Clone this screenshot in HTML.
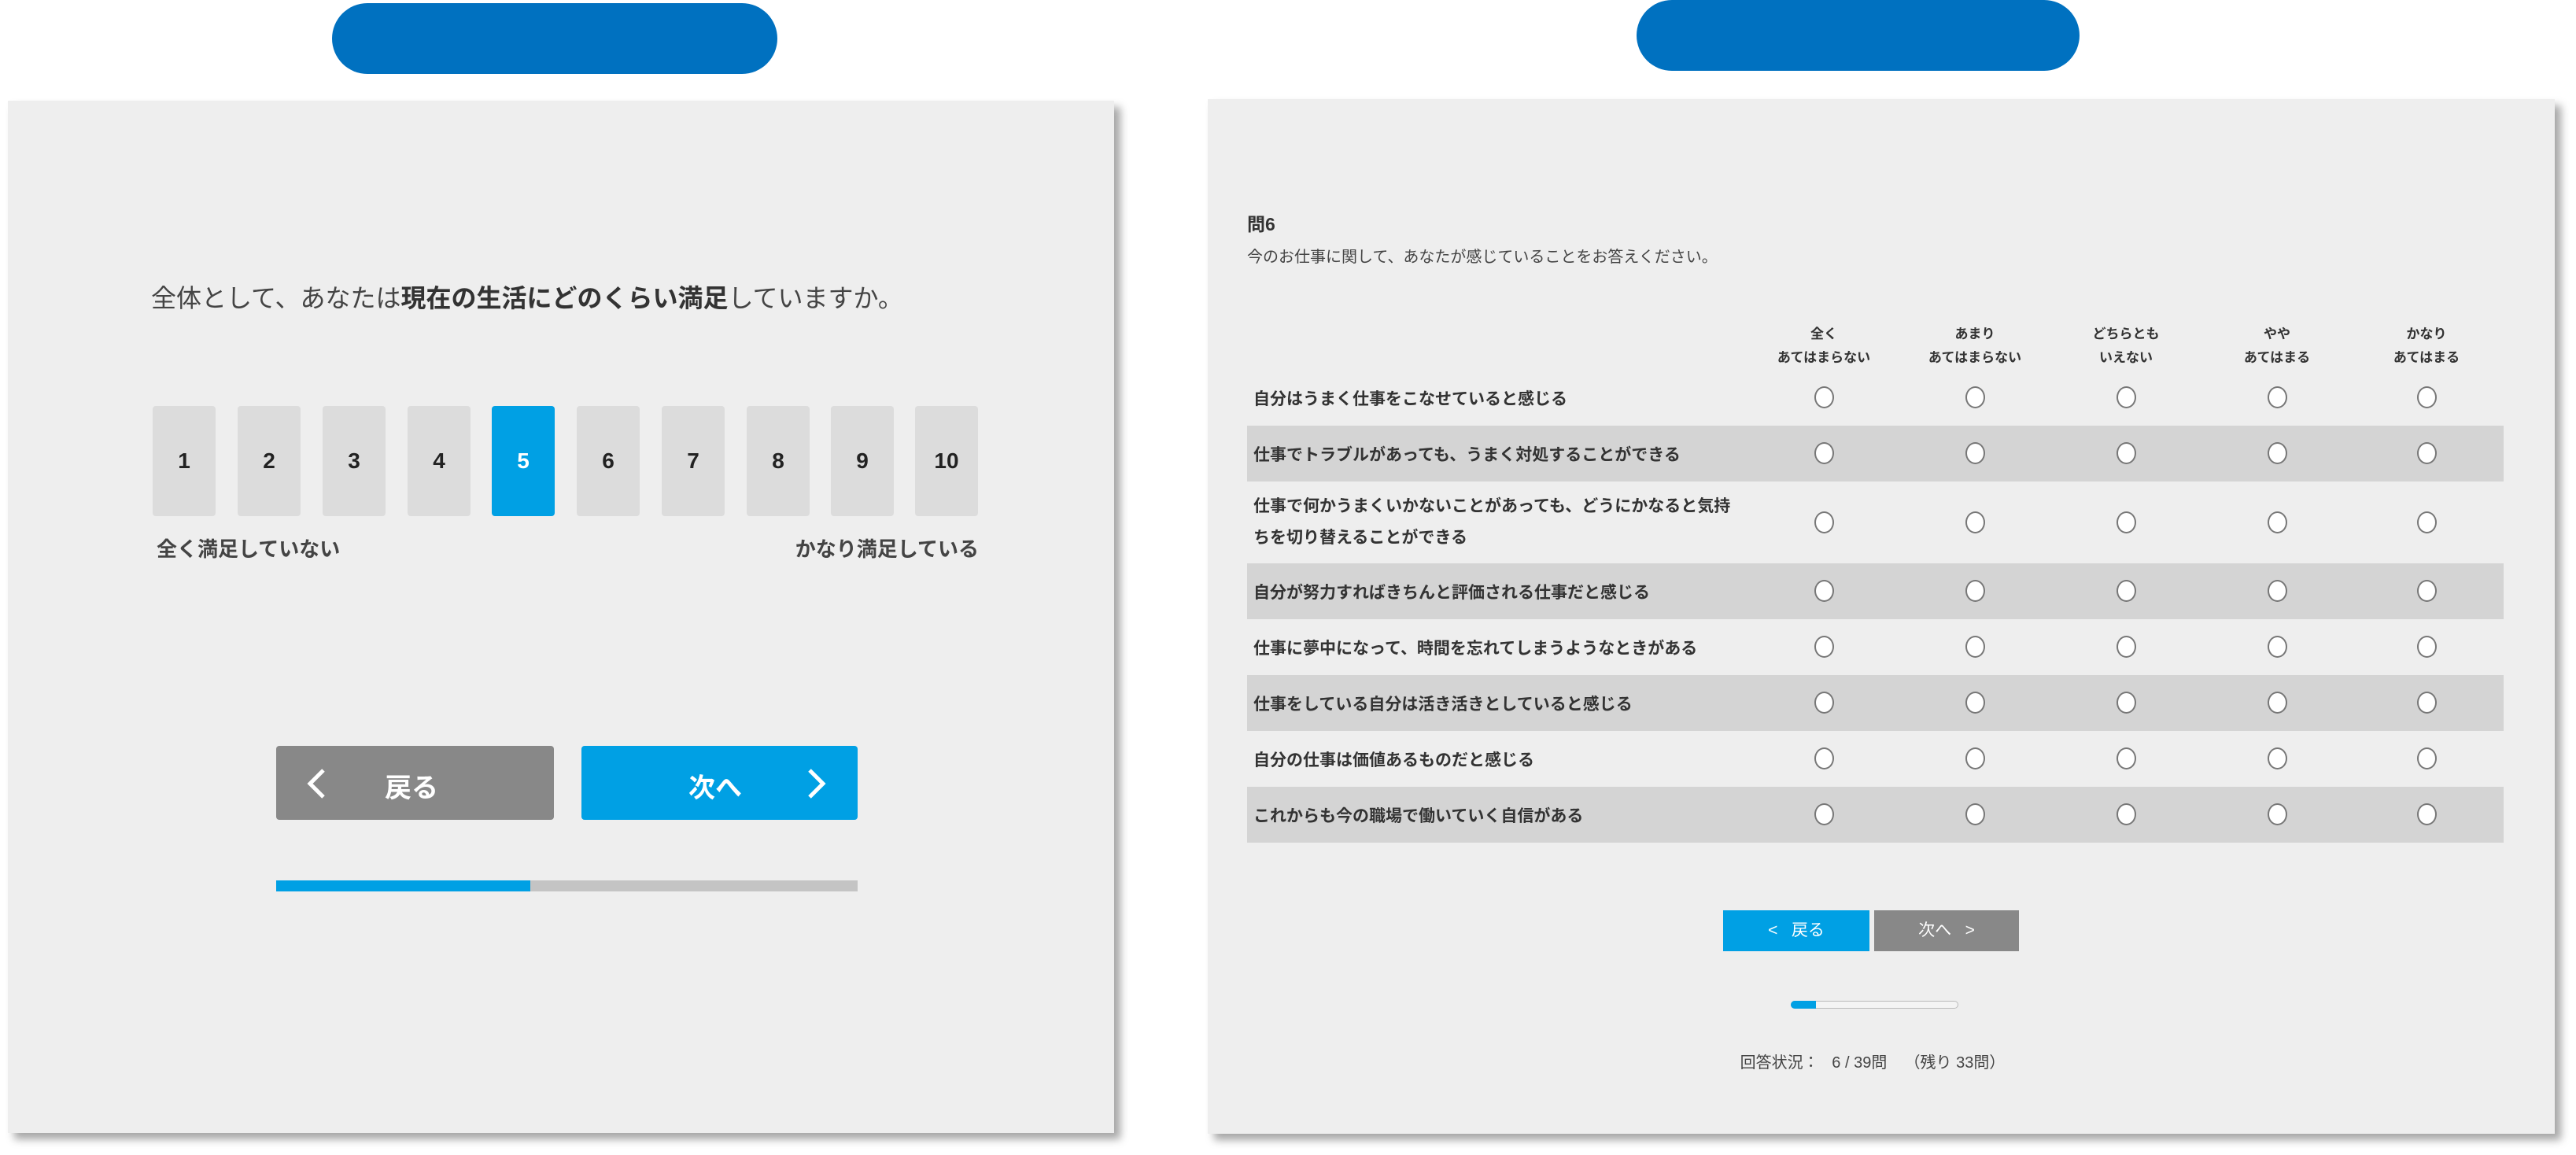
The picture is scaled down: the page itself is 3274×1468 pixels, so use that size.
<!DOCTYPE html>
<html><head><meta charset="utf-8"><style>
*{margin:0;padding:0;box-sizing:border-box}
body{width:3274px;height:1468px;background:#fff;position:relative;overflow:hidden;font-family:"Liberation Sans","Noto Sans CJK JP",sans-serif;color:#333}
.a{position:absolute}
.pill{background:#0071c0;border-radius:46px}
.panel{background:#eeeeee;box-shadow:8px 8px 10px rgba(0,0,0,.35)}
.nb{position:absolute;top:516px;width:80px;height:140px;background:#dcdcdc;border-radius:4px;font-size:28px;font-weight:bold;line-height:140px;text-align:center;color:#222}
.row{position:absolute;left:1585px;width:1597px;font-size:21px;font-weight:bold;color:#333;padding-left:8px;display:flex;align-items:center}
.g{background:#d4d4d4}
.rad{position:absolute;width:25px;height:28px;border:2px solid #777;border-radius:50%;background:#fff}
.hd{position:absolute;top:410px;width:200px;text-align:center;font-size:17px;line-height:30px;font-weight:bold;color:#333}
</style></head><body>
<div class="a pill" style="left:422px;top:4px;width:566px;height:90px"></div>
<div class="a pill" style="left:2080px;top:0;width:563px;height:90px"></div>

<div class="a panel" style="left:10px;top:128px;width:1406px;height:1312px"></div>
<div class="a" style="left:192px;top:354px;font-size:32px;color:#444;white-space:nowrap">全体として、あなたは<b style="color:#333">現在の生活にどのくらい満足</b>していますか。</div>
<div class="nb" style="left:194px">1</div><div class="nb" style="left:302px">2</div><div class="nb" style="left:410px">3</div><div class="nb" style="left:518px">4</div>
<div class="nb" style="left:625px;background:#00a0e4;color:#fff">5</div>
<div class="nb" style="left:733px">6</div><div class="nb" style="left:841px">7</div><div class="nb" style="left:949px">8</div><div class="nb" style="left:1056px">9</div><div class="nb" style="left:1163px">10</div>
<div class="a" style="left:199px;top:678px;font-size:26px;font-weight:bold;color:#444">全く満足していない</div>
<div class="a" style="left:944px;width:300px;text-align:right;top:678px;font-size:26px;font-weight:bold;color:#444">かなり満足している</div>
<div class="a" style="left:351px;top:948px;width:353px;height:94px;background:#888;border-radius:4px;color:#fff;font-size:34px;font-weight:bold">
<svg class="a" style="left:38px;top:28px" width="26" height="40"><path d="M22 3 L5 20 L22 37" stroke="#fff" stroke-width="5" fill="none"/></svg>
<span class="a" style="left:138px;top:26px">戻る</span></div>
<div class="a" style="left:739px;top:948px;width:351px;height:94px;background:#00a0e4;border-radius:4px;color:#fff;font-size:34px;font-weight:bold">
<span class="a" style="left:136px;top:26px">次へ</span>
<svg class="a" style="left:286px;top:28px" width="26" height="40"><path d="M4 3 L21 20 L4 37" stroke="#fff" stroke-width="5" fill="none"/></svg></div>
<div class="a" style="left:351px;top:1119px;width:739px;height:14px;background:#c4c4c4"></div>
<div class="a" style="left:351px;top:1119px;width:323px;height:14px;background:#00a0e4"></div>

<div class="a panel" style="left:1535px;top:126px;width:1712px;height:1315px"></div>
<div class="a" style="left:1585px;top:266px;font-size:23px;font-weight:bold">問6</div>
<div class="a" style="left:1585px;top:310px;font-size:20px;color:#444">今のお仕事に関して、あなたが感じていることをお答えください。</div>
<div class="hd" style="left:2218px">全く<br>あてはまらない</div>
<div class="hd" style="left:2410px">あまり<br>あてはまらない</div>
<div class="hd" style="left:2602px">どちらとも<br>いえない</div>
<div class="hd" style="left:2794px">やや<br>あてはまる</div>
<div class="hd" style="left:2984px">かなり<br>あてはまる</div>
<div class="row" style="top:470px;height:71px">自分はうまく仕事をこなせていると感じる</div>
<div class="row g" style="top:541px;height:71px">仕事でトラブルがあっても、うまく対処することができる</div>
<div class="row" style="top:612px;height:104px;line-height:40px">仕事で何かうまくいかないことがあっても、どうにかなると気持<br>ちを切り替えることができる</div>
<div class="row g" style="top:716px;height:71px">自分が努力すればきちんと評価される仕事だと感じる</div>
<div class="row" style="top:787px;height:71px">仕事に夢中になって、時間を忘れてしまうようなときがある</div>
<div class="row g" style="top:858px;height:71px">仕事をしている自分は活き活きとしていると感じる</div>
<div class="row" style="top:929px;height:71px">自分の仕事は価値あるものだと感じる</div>
<div class="row g" style="top:1000px;height:71px">これからも今の職場で働いていく自信がある</div>
<div id="rads"></div>
<script>
var cs=[2318,2510,2702,2894,3084],ys=[505,576,664,751,822,893,964,1035],h='';
ys.forEach(function(y){cs.forEach(function(x){h+='<div class="rad" style="left:'+(x-12)+'px;top:'+(y-14)+'px"></div>'})});
document.getElementById('rads').innerHTML=h;
</script>
<div class="a" style="left:2190px;top:1157px;width:186px;height:52px;background:#00a0e4;color:#fff;font-size:21px;line-height:52px;text-align:center">&lt;&nbsp;&nbsp;&nbsp;戻る</div>
<div class="a" style="left:2382px;top:1157px;width:184px;height:52px;background:#888;color:#fff;font-size:21px;line-height:52px;text-align:center">次へ&nbsp;&nbsp;&nbsp;&gt;</div>
<div class="a" style="left:2276px;top:1272px;width:213px;height:10px;border:1px solid #bbb;border-radius:5px;background:#f4f4f4"></div>
<div class="a" style="left:2276px;top:1272px;width:32px;height:10px;background:#00a0e4;border-radius:5px 0 0 5px"></div>
<div class="a" style="left:2200px;top:1334px;width:360px;text-align:center;font-size:20px;color:#444;white-space:nowrap">回答状況：&nbsp;&nbsp;&nbsp;6 / 39問&nbsp;&nbsp;&nbsp;&nbsp;（残り 33問）</div>
</body></html>
